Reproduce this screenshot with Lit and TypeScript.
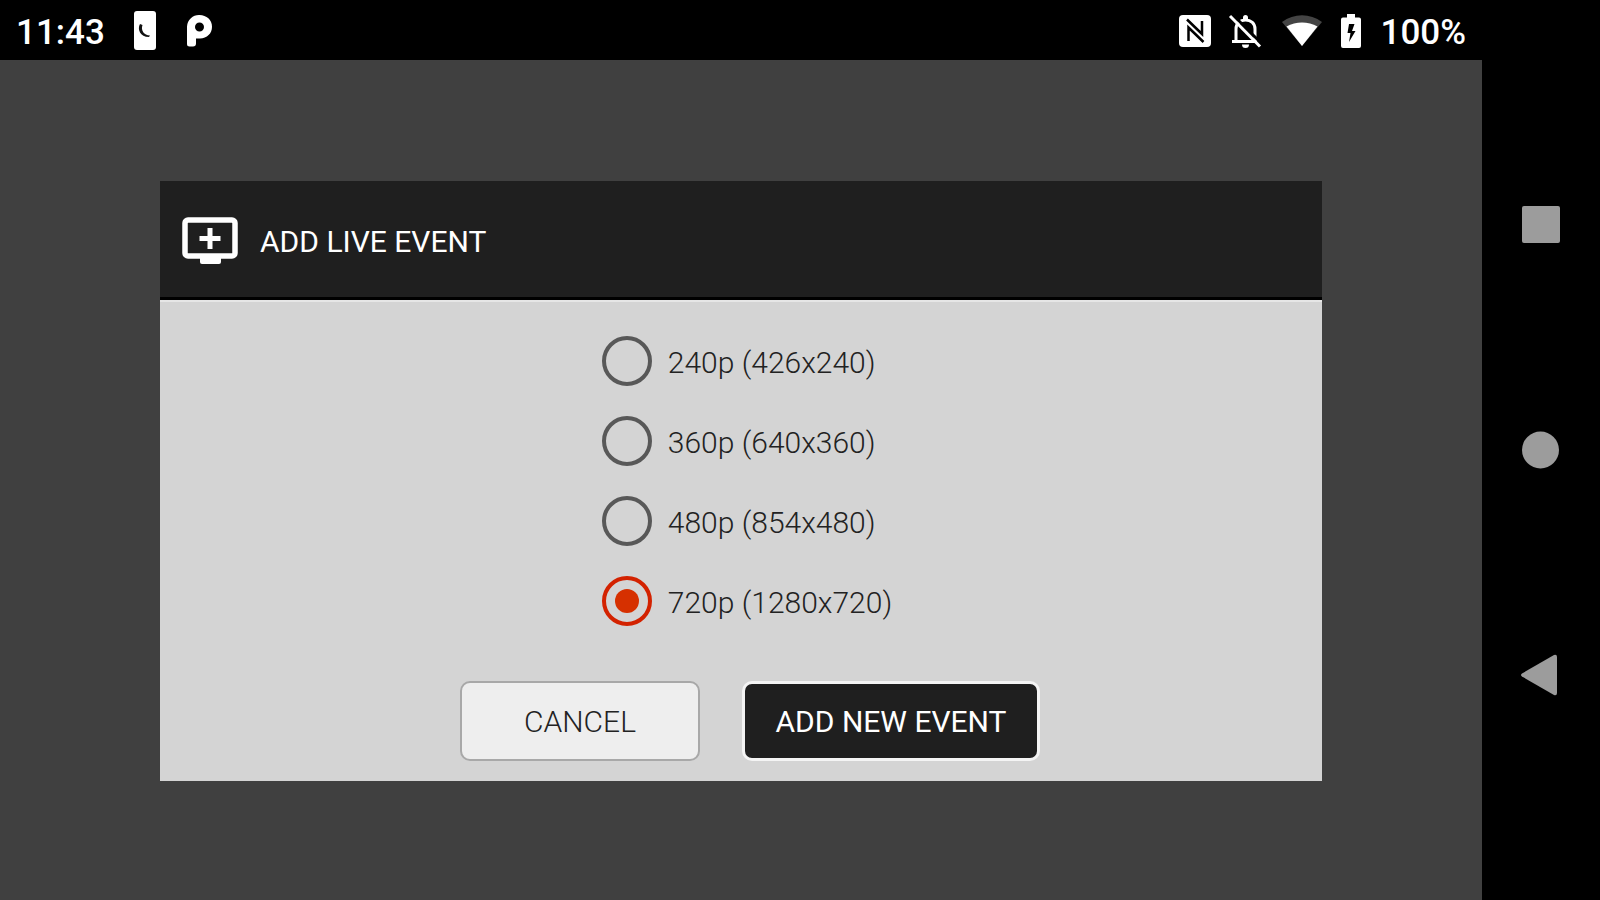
import { LitElement, html, css } from "lit";
import { customElement, state } from "lit/decorators.js";

const RESOLUTIONS = [
  { id: "240p", size: "426x240" },
  { id: "360p", size: "640x360" },
  { id: "480p", size: "854x480" },
  { id: "720p", size: "1280x720" },
];

@customElement("status-bar")
export class StatusBar extends LitElement {
  static styles = css`
    :host {
      display: flex;
      justify-content: space-between;
      align-items: center;
      height: 60px;
      padding: 2px 16px 0;
      box-sizing: border-box;
      background: #000;
      color: #fff;
      font: 500 35px/40px Roboto, sans-serif;
    }
    .group {
      display: flex;
      align-items: center;
    }
    .left { gap: 29px; }
    .right { gap: 20px; }
    .text { padding-top: 4px; }
    svg { display: block; fill: #fff; overflow: visible; }
  `;

  render() {
    return html`
      <div class="group left">
        <span class="text">11:43</span>
        <svg width="22" height="40" viewBox="0 0 22 40" role="img" aria-label="Phone">
          <rect width="22" height="39" rx="3" />
          <path d="M6 13C3 18 6 26 15 26L16 24.500C10 24.500 6.500 19 8.500 14Z" fill="#111" />
        </svg>
        <svg width="26" height="34" viewBox="-2 0 26 34" role="img" aria-label="Android Pie">
          <path fill-rule="evenodd" d="M0 12.500A12 12 0 0 1 12.500 1C19.500 1 25 6 25 12.800C25 19.500 20 24.500 13 24.500H9V29.500Q9 32.500 6 32.500H2.500Q0 32.500 0 30ZM12.500 8.500A4.500 4.500 0 1 0 12.500 17.500A4.500 4.500 0 1 0 12.500 8.500Z" />
        </svg>
      </div>
      <div class="group right">
        <svg width="30" height="32" viewBox="0 0 30 32" role="img" aria-label="NFC">
          <rect width="32" height="32" rx="4" />
          <path d="M8 4.500L23 19V6" fill="none" stroke="#000" stroke-width="2.500" />
          <path d="M9.500 26V12.500L24.500 27" fill="none" stroke="#000" stroke-width="2.500" />
        </svg>
        <svg width="32" height="34" viewBox="0 0 32 34" role="img" aria-label="Notifications off">
          <path d="M7 28V15C7 9.500 11 6 16.500 6S26 9.500 26 15V28" fill="none" stroke="#fff" stroke-width="3" />
          <path d="M3 26H28V29H3ZM13 30.500H20A3.500 3.500 0 0 1 13 30.500ZM14 6V3.500A2.500 2.500 0 0 1 19 3.500V6Z" />
          <path d="M3 0L33 30" stroke="#000" stroke-width="3" />
          <path d="M1 2L31 32.500" stroke="#fff" stroke-width="3" />
        </svg>
        <svg width="40" height="32" viewBox="-1 0 40 32" role="img" aria-label="Wi-Fi">
          <path d="M0 7C12-2 28-2 40 7L20 31Z" fill="#444" />
          <path d="M4.500 11.500C14 6 26 6 35.500 11.500L20 31Z" />
        </svg>
        <svg width="20" height="34" viewBox="0 0 20 34" role="img" aria-label="Battery charging">
          <path fill-rule="evenodd" d="M6 0H14V3.500H18Q20 3.500 20 5.500V32Q20 34 18 34H2Q0 34 0 32V5.500Q0 3.500 2 3.500H6ZM8 10L6.500 19H9.500L8 28L14.500 17H11L13.500 10Z" />
        </svg>
        <span class="text">100%</span>
      </div>
    `;
  }
}

@customElement("nav-bar")
export class NavBar extends LitElement {
  static styles = css`
    :host {
      display: grid;
      background: #000;
    }
    nav {
      display: flex;
      flex-direction: column;
    }
    nav::before,
    nav::after {
      content: "";
      flex: 1;
    }
    button {
      flex: 2;
      display: grid;
      place-items: center;
      padding: 0;
      border: 0;
      background: none;
    }
    svg { display: block; fill: #9c9c9c; }
  `;

  render() {
    return html`
      <nav aria-label="System">
        <button aria-label="Recent apps">
          <svg width="40" height="38" viewBox="0 0 40 38"><rect x="1" width="38" height="37" rx="2" /></svg>
        </button>
        <button aria-label="Home">
          <svg width="40" height="38" viewBox="0 0 40 38"><circle cx="19.500" cy="19" r="18.500" /></svg>
        </button>
        <button aria-label="Back">
          <svg width="40" height="44" viewBox="0 0 40 44"><path d="M1 20.500L33 2Q36 1 36 4V40Q36 43 33 42L1 23.500Q-1 22 1 20.500Z" /></svg>
        </button>
      </nav>
    `;
  }
}

@customElement("app-root")
export class AppRoot extends LitElement {
  @state() private selected = "720p";

  static styles = css`
    :host {
      display: grid;
      grid-template-columns: 1fr 118px;
      min-height: 100vh;
      background: #404040;
      font-family: Roboto, sans-serif;
    }
    .screen {
      display: flex;
      flex-direction: column;
    }
    .stage {
      flex: 1;
      display: flex;
      align-items: center;
      padding: 2px 160px 0;
    }
    .dialog {
      flex: 1;
      background: #d4d4d4;
    }
    .header {
      display: flex;
      align-items: center;
      gap: 22px;
      height: 119px;
      padding: 2px 22px 0;
      box-sizing: border-box;
      background: #1f1f1f;
      border-bottom: 3px solid #000;
    }
    h1 {
      margin: 0;
      padding-top: 4px;
      color: #fff;
      font: 400 30px/36px Roboto, sans-serif;
    }
    .form {
      display: flex;
      flex-direction: column;
      align-items: center;
      padding: 19px 0 20px 18px;
      border-top: 2px solid #e6e6e6;
    }
    .options {
      margin: 0;
      padding: 0 6px 0 0;
      border: 0;
    }
    .option {
      display: flex;
      align-items: center;
      gap: 16px;
      height: 80px;
      color: #222;
      font-size: 30px;
      font-weight: 300;
    }
    .option-text { padding-top: 2px; }
    .radio {
      appearance: none;
      display: grid;
      place-items: center;
      width: 50px;
      height: 50px;
      margin: 0;
      border: 4px solid #585858;
      border-radius: 50%;
      box-sizing: border-box;
    }
    .radio:checked {
      border-color: #d32200;
    }
    .radio:checked::before {
      content: "";
      width: 24px;
      height: 24px;
      border-radius: 50%;
      background: #d63000;
    }
    .actions {
      display: flex;
      gap: 42px;
      margin-top: 40px;
    }
    .button {
      height: 80px;
      padding: 2px 0 0;
      box-sizing: border-box;
      border-radius: 10px;
      font: 400 30px/36px Roboto, sans-serif;
    }
    .cancel {
      width: 240px;
      border: 2px solid #a8a8a8;
      background: #eee;
      color: #222;
      font-weight: 300;
    }
    .add {
      width: 298px;
      border: 3px solid #f4f4f4;
      background: #1f1f1f;
      color: #fff;
    }
  `;

  render() {
    return html`
      <div class="screen">
        <status-bar></status-bar>
        <main class="stage">
          <section class="dialog" role="dialog" aria-labelledby="title">
            <header class="header">
              <svg width="56" height="47" viewBox="0 0 56 47" aria-hidden="true">
                <rect x="3" y="3" width="50" height="36" rx="3" fill="none" stroke="#fff" stroke-width="5.500" />
                <path d="M18 39H39V45Q39 47 37 47H20Q18 47 18 45Z" fill="#fff" />
                <path d="M28 11V32M17.500 21.500H38.500" stroke="#fff" stroke-width="5" />
              </svg>
              <h1 id="title">ADD LIVE EVENT</h1>
            </header>
            <form class="form" @submit=${(e: Event) => e.preventDefault()}>
              <fieldset class="options" aria-label="Resolution">
                ${RESOLUTIONS.map(
                  (r) => html`
                    <label class="option">
                      <input
                        class="radio"
                        type="radio"
                        name="resolution"
                        .value=${r.id}
                        .checked=${this.selected === r.id}
                        @change=${() => (this.selected = r.id)}
                      />
                      <span class="option-text">${r.id} (${r.size})</span>
                    </label>
                  `
                )}
              </fieldset>
              <div class="actions">
                <button class="button cancel" type="button">CANCEL</button>
                <button class="button add" type="submit">ADD NEW EVENT</button>
              </div>
            </form>
          </section>
        </main>
      </div>
      <nav-bar></nav-bar>
    `;
  }
}
